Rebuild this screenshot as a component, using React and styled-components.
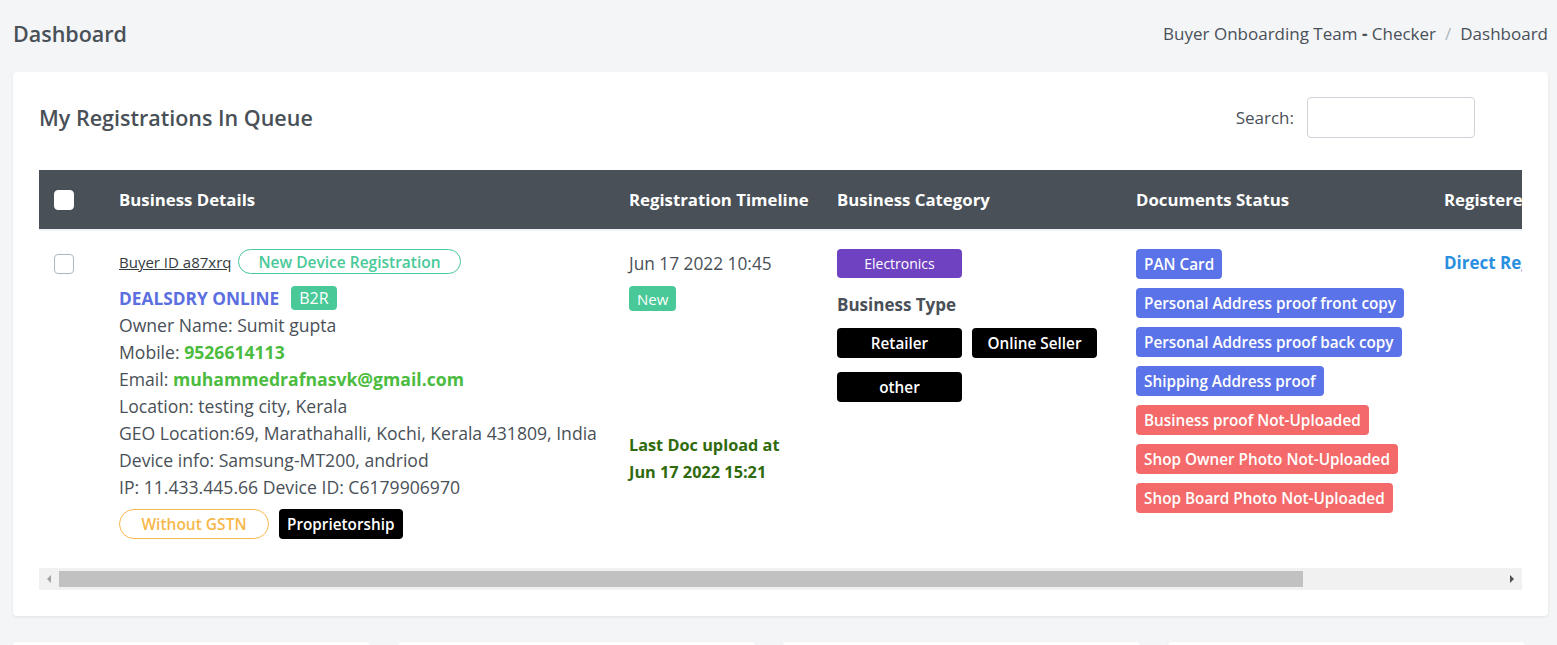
import React from 'react'
import styled, { createGlobalStyle } from 'styled-components'

const GlobalStyle = createGlobalStyle`
  * { box-sizing: border-box; }
  body {
    margin: 0;
    background: #f4f5f7;
    font-family: "Open Sans", "Liberation Sans", sans-serif;
    color: #495057;
    overflow: hidden;
  }
`

const Page = styled.div`
  padding: 0 9px 0 13px;
`

const PageHeader = styled.div`
  display: flex;
  align-items: center;
  justify-content: space-between;
  height: 72px;
  padding-bottom: 6px;
`

const PageTitle = styled.h4`
  margin: 0;
  font-size: 21.5px;
  font-weight: 600;
  color: #495057;
`

const Crumbs = styled.ol`
  display: flex;
  margin: 0;
  padding: 0;
  list-style: none;
  font-size: 17px;
  color: #495057;
  li + li::before {
    content: '/';
    padding: 0 9px;
    color: #adb5bd;
  }
  b { font-weight: 700; }
`

const Card = styled.div`
  background: #fff;
  border-radius: 4px;
  box-shadow: 0 1px 3px rgba(0, 0, 0, 0.08);
  padding: 25px 26px 26px;
`

const CardTop = styled.div`
  display: flex;
  align-items: center;
  justify-content: space-between;
  margin-bottom: 32px;
`

const CardTitle = styled.h5`
  margin: 0;
  font-size: 21.5px;
  font-weight: 600;
  color: #495057;
`

const SearchBox = styled.label`
  display: flex;
  align-items: center;
  gap: 13px;
  margin-right: 47px;
  font-size: 17px;
  input {
    width: 168px;
    height: 41px;
    border: 1px solid #ced4da;
    border-radius: 4px;
    outline: none;
  }
`

const TableWrap = styled.div`
  overflow: hidden;
`

const Table = styled.table`
  width: 1720px;
  table-layout: fixed;
  border-collapse: collapse;
  margin-bottom: 14px;
`

const Th = styled.th`
  height: 60px;
  background: #495057;
  color: #fff;
  font-size: 16.8px;
  font-weight: 700;
  text-align: left;
  padding: 0 15px;
  white-space: nowrap;
`

const Td = styled.td`
  vertical-align: top;
  padding: 18px 15px 15px;
  border-top: 2px solid #eff2f7;
`

const Check = styled.span`
  display: block;
  width: 20px;
  height: 20px;
  border-radius: 4px;
  background: #fff;
  border: 1px solid ${p => (p.$dark ? '#fff' : '#adb5bd')};
  margin-top: ${p => (p.$dark ? '0' : '5px')};
`

const Row = styled.div`
  display: flex;
  align-items: center;
  gap: ${p => p.$gap || 7}px;
  margin-top: ${p => p.$top || 0}px;
`

const BuyerId = styled.a`
  font-size: 15px;
  color: #343a40;
  text-decoration: underline;
`

const Pill = styled.span`
  display: inline-flex;
  align-items: center;
  justify-content: center;
  height: ${p => p.$h || 25}px;
  width: ${p => (p.$w ? p.$w + 'px' : 'auto')};
  padding: 0 19px;
  border: 1px solid ${p => p.$color};
  border-radius: 15px;
  color: ${p => p.$color};
  font-size: 15.5px;
  font-weight: 600;
  white-space: nowrap;
`

const Company = styled.span`
  font-size: 17.3px;
  font-weight: 700;
  color: #5c6fe0;
`

const Badge = styled.span`
  display: inline-flex;
  align-items: center;
  justify-content: center;
  height: ${p => p.$h || 30}px;
  width: ${p => (p.$w ? p.$w + 'px' : 'auto')};
  padding: 0 ${p => (p.$w ? 0 : 8)}px;
  border-radius: 4px;
  background: ${p => p.$bg};
  color: #fff;
  font-size: ${p => p.$fs || 15.3}px;
  font-weight: ${p => p.$fw || 600};
  white-space: nowrap;
`

const Info = styled.div`
  font-size: 17.6px;
  line-height: 27px;
  white-space: nowrap;
  strong { color: #4cbc3f; font-weight: 700; }
`

const DateText = styled.div`
  font-size: 17.3px;
  line-height: 27px;
  margin-top: 1px;
`

const LastUpload = styled.div`
  margin-top: 121px;
  font-size: 16.3px;
  line-height: 27px;
  font-weight: 700;
  color: #2f6b0c;
`

const SubHead = styled.div`
  font-size: 17px;
  font-weight: 700;
  line-height: 27px;
  margin: 13px 0 10px;
`

const TagWrap = styled.div`
  display: flex;
  flex-wrap: wrap;
  gap: 14px 10px;
  width: 270px;
`

const DocList = styled.div`
  display: flex;
  flex-direction: column;
  align-items: flex-start;
  gap: 9px;
`

const LinkText = styled.a`
  display: block;
  font-size: 17px;
  font-weight: 700;
  color: #2a8fdf;
  white-space: nowrap;
  line-height: 27px;
`

const ScrollBar = styled.div`
  display: flex;
  height: 22px;
  background: #f1f1f1;
`

const Arrow = styled.span`
  width: 20px;
  display: flex;
  align-items: center;
  justify-content: center;
  &::after {
    content: '';
    border-top: 4px solid transparent;
    border-bottom: 4px solid transparent;
    ${p => (p.$right ? 'border-left: 4px solid #505050;' : 'border-right: 4px solid #a3a3a3;')}
  }
`

const Track = styled.div`
  flex: 1;
  padding: 3px 0;
`

const Thumb = styled.div`
  height: 100%;
  background: #c1c1c1;
`

const MoreCards = styled.div`
  display: grid;
  grid-template-columns: repeat(4, 1fr);
  gap: 28px;
  margin: 26px 23px 0 0;
`

const Stub = styled.div`
  height: 120px;
  background: #fff;
  border-radius: 4px;
  box-shadow: 0 1px 3px rgba(0, 0, 0, 0.08);
`

const docs = [
  ['PAN Card', '#5b73e8'],
  ['Personal Address proof front copy', '#5b73e8'],
  ['Personal Address proof back copy', '#5b73e8'],
  ['Shipping Address proof', '#5b73e8'],
  ['Business proof Not-Uploaded', '#f46a6a'],
  ['Shop Owner Photo Not-Uploaded', '#f46a6a'],
  ['Shop Board Photo Not-Uploaded', '#f46a6a'],
]

export default function App() {
  const thumbWidth = (1247 / 1446) * 100
  return (
    <Page>
      <GlobalStyle />
      <PageHeader>
        <PageTitle>Dashboard</PageTitle>
        <Crumbs>
          <li>Buyer Onboarding Team <b>-</b> Checker</li>
          <li>Dashboard</li>
        </Crumbs>
      </PageHeader>

      <Card>
        <CardTop>
          <CardTitle>My Registrations In Queue</CardTitle>
          <SearchBox>
            Search:
            <input type="search" />
          </SearchBox>
        </CardTop>

        <TableWrap>
          <Table>
            <colgroup>
              <col style={{ width: 65 }} />
              <col style={{ width: 510 }} />
              <col style={{ width: 208 }} />
              <col style={{ width: 299 }} />
              <col style={{ width: 308 }} />
              <col style={{ width: 330 }} />
            </colgroup>
            <thead>
              <tr>
                <Th><Check $dark /></Th>
                <Th>Business Details</Th>
                <Th>Registration Timeline</Th>
                <Th>Business Category</Th>
                <Th>Documents Status</Th>
                <Th>Registered Through</Th>
              </tr>
            </thead>
            <tbody>
              <tr>
                <Td><Check /></Td>
                <Td>
                  <Row>
                    <BuyerId>Buyer ID a87xrq</BuyerId>
                    <Pill $color="#48c997">New Device Registration</Pill>
                  </Row>
                  <Row $gap={12} $top={12}>
                    <Company>DEALSDRY ONLINE</Company>
                    <Badge $bg="#48c997" $h={24} $fs={16} $fw={400}>B2R</Badge>
                  </Row>
                  <Info style={{ marginTop: 2 }}>
                    <div>Owner Name: Sumit gupta</div>
                    <div>Mobile: <strong>9526614113</strong></div>
                    <div>Email: <strong>muhammedrafnasvk@gmail.com</strong></div>
                    <div>Location: testing city, Kerala</div>
                    <div>GEO Location:69, Marathahalli, Kochi, Kerala 431809, India</div>
                    <div>Device info: Samsung-MT200, andriod</div>
                    <div>IP: 11.433.445.66 Device ID: C6179906970</div>
                  </Info>
                  <Row $gap={10} $top={8}>
                    <Pill $color="#f7b84b" $h={30} $w={150}>Without GSTN</Pill>
                    <Badge $bg="#000">Proprietorship</Badge>
                  </Row>
                </Td>
                <Td>
                  <DateText>Jun 17 2022 10:45</DateText>
                  <Row $top={9}>
                    <Badge $bg="#48c997" $h={25} $fs={15} $fw={500}>New</Badge>
                  </Row>
                  <LastUpload>
                    Last Doc upload at
                    <br />
                    Jun 17 2022 15:21
                  </LastUpload>
                </Td>
                <Td>
                  <Badge $bg="#6f42c1" $w={125} $h={29} $fs={14} $fw={500}>Electronics</Badge>
                  <SubHead>Business Type</SubHead>
                  <TagWrap>
                    <Badge $bg="#000" $w={125}>Retailer</Badge>
                    <Badge $bg="#000" $w={125}>Online Seller</Badge>
                    <Badge $bg="#000" $w={125}>other</Badge>
                  </TagWrap>
                </Td>
                <Td>
                  <DocList>
                    {docs.map(([label, bg]) => (
                      <Badge key={label} $bg={bg}>{label}</Badge>
                    ))}
                  </DocList>
                </Td>
                <Td>
                  <LinkText>Direct Registration</LinkText>
                </Td>
              </tr>
            </tbody>
          </Table>
        </TableWrap>

        <ScrollBar>
          <Arrow />
          <Track>
            <Thumb style={{ width: `${thumbWidth}%` }} />
          </Track>
          <Arrow $right />
        </ScrollBar>
      </Card>

      <MoreCards>
        <Stub />
        <Stub />
        <Stub />
        <Stub />
      </MoreCards>
    </Page>
  )
}
